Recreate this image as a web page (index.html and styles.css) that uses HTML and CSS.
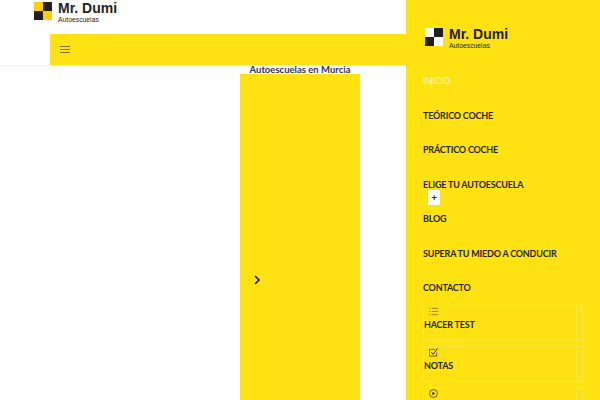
FILE: index.html
```html
<!DOCTYPE html>
<html lang="es">
<head>
    <meta charset="UTF-8">
    <title>Mr. Dumi Autoescuelas</title>
    <link rel="stylesheet" href="styles.css">
</head>
<body>
    <div class="page">
        <header class="site-header">
            <a class="logo logo-top" href="#">
                <svg class="logo-mark" viewBox="0 0 18 18">
                    <rect width="9" height="9" fill="#ffcf00"/>
                    <rect x="9" width="9" height="9" fill="#231f20"/>
                    <rect y="9" width="9" height="9" fill="#231f20"/>
                    <rect x="9" y="9" width="9" height="9" fill="#ffcf00"/>
                </svg>
                <span class="logo-text">
                    <span class="logo-name">Mr. Dumi</span>
                    <span class="logo-sub">Autoescuelas</span>
                </span>
            </a>
            <div class="nav-bar">
                <svg class="burger" viewBox="0 0 10 7">
                    <path d="M0 .5h10M0 3.500h10M0 6.500h10" stroke="#444" stroke-width=".7" fill="none"/>
                </svg>
            </div>
        </header>
        <main class="content">
            <h2 class="content-title">Autoescuelas en Murcia</h2>
            <div class="slider">
                <svg class="slider-next" viewBox="0 0 8 10">
                    <path d="M2 1l4 4-4 4" stroke="#222" stroke-width="1.700" fill="none"/>
                </svg>
            </div>
        </main>
    </div>

    <aside class="side-menu">
        <a class="logo logo-side" href="#">
            <svg class="logo-mark" viewBox="0 0 18 18">
                <rect width="9" height="9" fill="#fff"/>
                <rect x="9" width="9" height="9" fill="#231f20"/>
                <rect y="9" width="9" height="9" fill="#231f20"/>
                <rect x="9" y="9" width="9" height="9" fill="#fff"/>
            </svg>
            <span class="logo-text">
                <span class="logo-name">Mr. Dumi</span>
                <span class="logo-sub">Autoescuelas</span>
            </span>
        </a>
        <ul class="menu">
            <li class="active">INICIO</li>
            <li>TEÓRICO COCHE</li>
            <li>PRÁCTICO COCHE</li>
            <li class="has-sub">ELIGE TU AUTOESCUELA<span class="sub-toggle">+</span></li>
            <li>BLOG</li>
            <li>SUPERA TU MIEDO A CONDUCIR</li>
            <li>CONTACTO</li>
        </ul>
        <div class="tools">
            <div class="tool">
                <svg class="tool-icon" viewBox="0 0 10 10">
                    <path d="M3 1.500h7M3 5h7M3 8.500h7M0 1.500h1.500M0 5h1.500M0 8.500h1.500" stroke="#555" stroke-width=".7" fill="none"/>
                </svg>
                <span class="tool-label">HACER TEST</span>
            </div>
            <div class="tool">
                <svg class="tool-icon" viewBox="0 0 10 10">
                    <path d="M8.500 5v4h-8V1.500h6" stroke="#333" stroke-width=".8" fill="none"/>
                    <path d="M2.500 4.500l2 2.500L9.500.5" stroke="#222" stroke-width="1.100" fill="none"/>
                </svg>
                <span class="tool-label">NOTAS</span>
            </div>
            <div class="tool">
                <svg class="tool-icon" viewBox="0 0 10 10">
                    <circle cx="5" cy="5" r="4.400" stroke="#333" stroke-width=".8" fill="none"/>
                    <path d="M3.800 3l3 2-3 2z" fill="#222"/>
                </svg>
            </div>
        </div>
    </aside>
</body>
</html>
```

FILE: styles.css
```css
* {
    box-sizing: border-box;
}

html, body {
    height: 400px;
    margin: 0;
    overflow: hidden;
}

body {
    position: relative;
    font-family: "Lato", "Liberation Sans", sans-serif;
    background: #fff;
    color: #222;
}

.logo {
    display: flex;
    align-items: flex-start;
    gap: 6px;
    color: #231f20;
    text-decoration: none;
}

.logo-mark {
    width: 18px;
    height: 18px;
    margin-top: 2px;
    flex: none;
}

.logo-text {
    display: flex;
    flex-direction: column;
}

.logo-name {
    font-family: "Liberation Sans", sans-serif;
    font-size: 14px;
    font-weight: 700;
    line-height: 16px;
}

.logo-sub {
    margin-top: -.4px;
    font-family: "Liberation Sans", sans-serif;
    font-size: 6.800px;
    line-height: 8px;
}

/* Cabecera */
.site-header {
    height: 66px;
    border-bottom: 1px solid #f0f0f0;
}

.logo-top {
    height: 34px;
    padding-left: 34px;
}

.nav-bar {
    display: flex;
    align-items: center;
    height: 31px;
    margin: 0 50px;
    padding-left: 10px;
    background: #ffe211;
}

.burger {
    width: 10px;
    height: 7px;
}

/* Contenido */
.content-title {
    height: 8px;
    margin: 0;
    font-size: 9.500px;
    font-weight: 700;
    line-height: 7px;
    color: #34343f;
    text-align: center;
}

.slider {
    width: 120px;
    height: 326px;
    margin: 0 auto;
    padding: 201px 0 0 13px;
    background: #ffe211;
}

.slider-next {
    display: block;
    width: 8px;
    height: 10px;
}

/* Menu lateral */
.side-menu {
    position: absolute;
    top: 0;
    right: 0;
    width: 194px;
    height: 400px;
    overflow: hidden;
    padding: 26px 17px 0;
    background: #ffe211;
}

.logo-side {
    height: 23px;
    margin-left: 2px;
}

.menu {
    list-style: none;
    margin: 15px 0 -.5px;
    padding: 0;
}

.menu li {
    position: relative;
    height: 34.500px;
    font-size: 9px;
    font-weight: 700;
    letter-spacing: -.2px;
    line-height: 34.500px;
    color: #2a2410;
}

.menu li.active {
    color: #fff3a0;
}

.sub-toggle {
    position: absolute;
    left: 5px;
    top: 22px;
    width: 12px;
    height: 15px;
    background: #fff;
    color: #33334a;
    font-size: 10px;
    line-height: 15px;
    text-align: center;
}

.tool {
    height: 36px;
    margin-bottom: 5px;
    padding: 1px 0 0;
    border: 1px solid #ffe83d;
    box-shadow: inset -5px 0 0 #ffe211, inset -6px 0 0 #ffe83d;
}

.tool-icon {
    display: block;
    width: 9px;
    height: 9px;
    margin-left: 5px;
}

.tool-label {
    display: block;
    margin-top: 2px;
    font-size: 9px;
    font-weight: 700;
    letter-spacing: -.2px;
    line-height: 14px;
    color: #2a2410;
}
```
